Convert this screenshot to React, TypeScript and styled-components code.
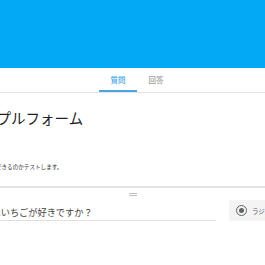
import styled, { createGlobalStyle } from "styled-components";

const GlobalStyle = createGlobalStyle`
  html, body {
    margin: 0;
    padding: 0;
    background: #ffffff;
    overflow: hidden;
  }
  body {
    font-family: "Noto Sans CJK JP", "Noto Sans", sans-serif;
    color: #212121;
  }
`;

const Page = styled.div`
  width: 265px;
  min-height: 265px;
  overflow: hidden;
`;

const Header = styled.header`
  height: 68px;
  background: #03a9f4;
`;

const TabBar = styled.nav`
  display: flex;
  height: 24px;
  padding-left: 99px;
  border-bottom: 1px solid #e4e4e4;
`;

const Tab = styled.div<{ $active?: boolean }>`
  width: 38px;
  box-sizing: border-box;
  display: flex;
  align-items: center;
  justify-content: center;
  font-size: 7.5px;
  font-weight: 500;
  color: ${(p) => (p.$active ? "#3ba3e8" : "#9e9e9e")};
  border-bottom: 2px solid ${(p) => (p.$active ? "#4ba6e0" : "transparent")};
`;

const Main = styled.main`
  margin-left: -40px;
  width: 346px;
`;

const TitleCard = styled.section`
  padding: 16px 0 15px 8px;
  border-bottom: 2px solid #e3e3e3;
`;

const FormTitle = styled.h1`
  margin: 0;
  font-size: 14.5px;
  line-height: 18px;
  font-weight: 400;
  color: #202124;
  white-space: nowrap;
`;

const Description = styled.p`
  margin: 36px 0 0;
  font-size: 5.6px;
  line-height: 8px;
  color: #333333;
  white-space: nowrap;
`;

const QuestionCard = styled.section`
  padding: 5px 0 0;
`;

const DragHandle = styled.div`
  width: 8px;
  height: 1px;
  margin: 0 auto;
  border-top: 1px solid #bdbdbd;
  border-bottom: 1px solid #bdbdbd;
`;

const QuestionRow = styled.div`
  display: flex;
  align-items: flex-start;
  gap: 13px;
  margin-top: 4px;
  padding-left: 4px;
`;

const QuestionInput = styled.div`
  width: 252px;
  flex: none;
  padding: 6px 0 2px;
  font-size: 9.2px;
  line-height: 12px;
  color: #424242;
  border-bottom: 1px solid #e0e0e0;
  white-space: nowrap;
`;

const TypeSelect = styled.div`
  flex: 1;
  height: 21px;
  display: flex;
  align-items: center;
  gap: 5px;
  padding-left: 7px;
  background: #f4f4f4;
  border-radius: 2px 0 0 2px;
  white-space: nowrap;
`;

const Radio = styled.span`
  width: 11px;
  height: 11px;
  box-sizing: border-box;
  border: 1.5px solid #616161;
  border-radius: 50%;
  display: flex;
  align-items: center;
  justify-content: center;
  flex: none;

  &::after {
    content: "";
    width: 5px;
    height: 5px;
    border-radius: 50%;
    background: #616161;
  }
`;

const TypeLabel = styled.span`
  font-size: 6.5px;
  color: #616161;
`;

const App = () => {
  return (
    <Page>
      <GlobalStyle />
      <Header />
      <TabBar>
        <Tab $active>質問</Tab>
        <Tab>回答</Tab>
      </TabBar>
      <Main>
        <TitleCard>
          <FormTitle>サンプルフォーム</FormTitle>
          <Description>ここで何ができるのかテストします。</Description>
        </TitleCard>
        <QuestionCard>
          <DragHandle />
          <QuestionRow>
            <QuestionInput>あなたはいちごが好きですか？</QuestionInput>
            <TypeSelect>
              <Radio />
              <TypeLabel>ラジオボタン</TypeLabel>
            </TypeSelect>
          </QuestionRow>
        </QuestionCard>
      </Main>
    </Page>
  );
};

export default App;
